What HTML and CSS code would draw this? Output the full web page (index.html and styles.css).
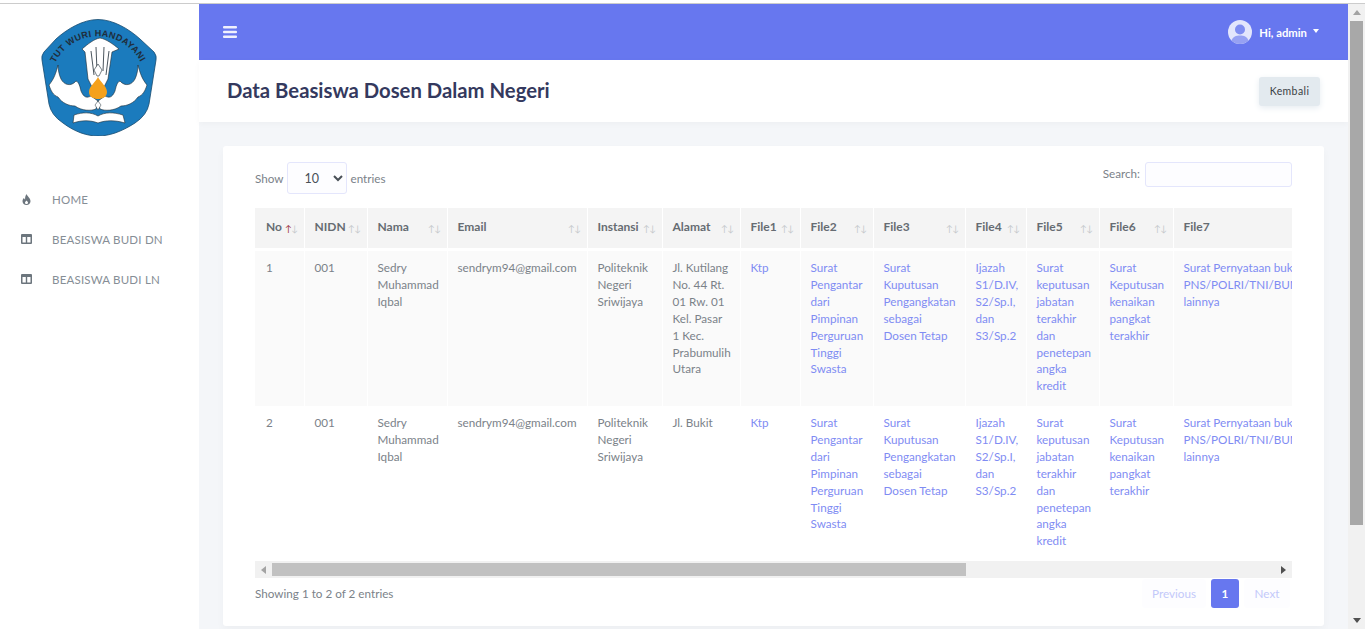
FILE: index.html
```html
<!DOCTYPE html>
<html lang="id">
<head>
    <meta charset="UTF-8">
    <meta name="viewport" content="width=device-width, initial-scale=1.0">
    <title>Data Beasiswa Dosen Dalam Negeri</title>
    <link rel="stylesheet" href="styles.css">
</head>
<body>

<div class="top-strip"></div>

<div class="layout">
    <aside class="sidebar">
        <div class="logo">
            <svg width="116" height="117" viewBox="0 0 116 117">
                <path d="M57 .5C72 .5 88 10 99 20L113 33Q116 37 115 41L108 85Q106 96 94 104C80 113 68 117 57 117C46 117 34 113 22 104Q10 96 8 85L1 41Q0 37 3 33L15 20C26 10 42 .5 57 .5Z" fill="#1b7bbd" stroke="#174a6e" stroke-width=".8"/>
                <defs><path id="logoArc" d="M14 44A48 48 0 0 1 100 44"/></defs>
                <text class="logo-text"><textPath href="#logoArc" textLength="105" lengthAdjust="spacing">TUT WURI HANDAYANI</textPath></text>
                <!-- sayap -->
                <path d="M17 46C15 54 13 60 8 66C10 72 12 76 17 78C21 84 28 87 34 87C41 92 50 92 55 90L57 82L50 77C46 79 43 79 40 72C39 68 38 63 35 62C30 68 23 66 20 60C18 56 17 50 17 46Z" fill="#fff" stroke="#1d2a33" stroke-width=".6"/>
                <path d="M97 46C99 54 101 60 106 66C104 72 102 76 97 78C93 84 86 87 80 87C73 92 64 92 59 90L57 82L64 77C68 79 71 79 74 72C75 68 76 63 79 62C84 68 91 66 94 60C96 56 97 50 97 46Z" fill="#fff" stroke="#1d2a33" stroke-width=".6"/>
                <!-- pena -->
                <path d="M41 30C47 25 53 20 59 19C65 20 72 25 78 30L71 33L67 60L62 70H52L47 60L44 33Z" fill="#fff" stroke="#1d2a33" stroke-width=".6"/>
                <path d="M50 32L53 56M55 28L56 52M63 28L62 52M68 32L65 56" stroke="#1d2a33" stroke-width=".8" fill="none"/>
                <path d="M57 45L61 51L58 57H56L53 51Z" fill="#fff" stroke="#1d2a33" stroke-width=".6"/>
                <!-- api -->
                <path d="M57 58C59 63 66 67 66 73C66 78 61 80 57 80C53 80 48 78 48 73C48 67 55 63 57 58Z" fill="#f5a11c"/>
                <path d="M57 82L60 86L57 91L54 86Z" fill="#fff" stroke="#1d2a33" stroke-width=".5"/>
                <!-- buku -->
                <path d="M33 96C42 93 50 93 57 97C64 93 72 93 82 96L84 104C74 101 65 101 57 104C49 101 41 101 32 104Z" fill="#fff" stroke="#1d2a33" stroke-width=".6"/>
            </svg>
        </div>
        <nav class="side-menu">
            <a class="side-link" href="#">
                <svg class="side-icon" width="10" height="11" viewBox="0 0 10 11"><path d="M5 0C5.500 2 9 4 9 7.200C9 9.500 7.200 11 5 11C2.800 11 1 9.500 1 7.200C1 5.800 1.700 4.700 2.500 4C2.700 4.900 3.100 5.400 3.600 5.600C3.400 3.500 4 1.500 5 0ZM5 6.500C4 7.500 3.500 8 3.500 8.700C3.500 9.500 4.200 10 5 10C5.800 10 6.500 9.500 6.500 8.700C6.500 8 6 7.500 5 6.500Z"/></svg>
                <span>HOME</span>
            </a>
            <a class="side-link" href="#">
                <svg class="side-icon" width="11" height="10" viewBox="0 0 11 10"><path fill-rule="evenodd" d="M1 0H10Q11 0 11 1V9Q11 10 10 10H1Q0 10 0 9V1Q0 0 1 0ZM1.500 3V8.500H4.800V3ZM6.200 3V8.500H9.500V3Z"/></svg>
                <span>BEASISWA BUDI DN</span>
            </a>
            <a class="side-link" href="#">
                <svg class="side-icon" width="11" height="10" viewBox="0 0 11 10"><path fill-rule="evenodd" d="M1 0H10Q11 0 11 1V9Q11 10 10 10H1Q0 10 0 9V1Q0 0 1 0ZM1.500 3V8.500H4.800V3ZM6.200 3V8.500H9.500V3Z"/></svg>
                <span>BEASISWA BUDI LN</span>
            </a>
        </nav>
    </aside>

    <div class="main">
        <header class="navbar">
            <svg class="burger" width="14" height="12" viewBox="0 0 14 12"><rect y="0" width="14" height="2.600" rx="1"/><rect y="4.700" width="14" height="2.600" rx="1"/><rect y="9.400" width="14" height="2.600" rx="1"/></svg>
            <div class="user-menu">
                <svg width="24" height="24" viewBox="0 0 24 24">
                    <circle cx="12" cy="12" r="12" fill="#e3e6fc"/>
                    <circle cx="12" cy="9.500" r="5" fill="#7f8df1"/>
                    <path d="M3.500 20.500C5 16.500 8 15.500 12 15.500C16 15.500 19 16.500 20.500 20.500C18.500 22.800 15.500 24 12 24C8.500 24 5.500 22.800 3.500 20.500Z" fill="#96a1f3"/>
                </svg>
                <span class="user-name">Hi, admin</span>
                <span class="caret"></span>
            </div>
        </header>

        <div class="section-header">
            <h1>Data Beasiswa Dosen Dalam Negeri</h1>
            <a class="btn-back" href="#">Kembali</a>
        </div>

        <div class="content">
            <div class="card">
                <div class="dt-top">
                    <label class="dt-length">Show
                        <select><option>10</option><option>25</option><option>50</option></select>
                        entries</label>
                    <label class="dt-search"><span class="search-label">Search:</span> <input type="text"></label>
                </div>

                <div class="table-wrap">
                    <table>
                        <colgroup>
                            <col class="c-no"><col class="c-nidn"><col class="c-nama"><col class="c-email">
                            <col class="c-instansi"><col class="c-alamat"><col class="c-f1"><col class="c-f2">
                            <col class="c-f3"><col class="c-f4"><col class="c-f5"><col class="c-f6"><col class="c-f7">
                        </colgroup>
                        <thead>
                            <tr>
                                <th><div class="th-in">No <span class="sort"><b>↑</b>↓</span></div></th>
                                <th><div class="th-in">NIDN <span class="sort">↑↓</span></div></th>
                                <th><div class="th-in">Nama <span class="sort">↑↓</span></div></th>
                                <th><div class="th-in">Email <span class="sort">↑↓</span></div></th>
                                <th><div class="th-in">Instansi <span class="sort">↑↓</span></div></th>
                                <th><div class="th-in">Alamat <span class="sort">↑↓</span></div></th>
                                <th><div class="th-in">File1 <span class="sort">↑↓</span></div></th>
                                <th><div class="th-in">File2 <span class="sort">↑↓</span></div></th>
                                <th><div class="th-in">File3 <span class="sort">↑↓</span></div></th>
                                <th><div class="th-in">File4 <span class="sort">↑↓</span></div></th>
                                <th><div class="th-in">File5 <span class="sort">↑↓</span></div></th>
                                <th><div class="th-in">File6 <span class="sort">↑↓</span></div></th>
                                <th><div class="th-in">File7</div></th>
                            </tr>
                        </thead>
                        <tbody>
                            <tr class="odd">
                                <td>1</td>
                                <td>001</td>
                                <td>Sedry<br>Muhammad<br>Iqbal</td>
                                <td>sendrym94@gmail.com</td>
                                <td>Politeknik<br>Negeri<br>Sriwijaya</td>
                                <td>Jl. Kutilang<br>No. 44 Rt.<br>01 Rw. 01<br>Kel. Pasar<br>1 Kec.<br>Prabumulih<br>Utara</td>
                                <td><a href="#">Ktp</a></td>
                                <td><a href="#">Surat<br>Pengantar<br>dari<br>Pimpinan<br>Perguruan<br>Tinggi<br>Swasta</a></td>
                                <td><a href="#">Surat<br>Kuputusan<br>Pengangkatan<br>sebagai<br>Dosen Tetap</a></td>
                                <td><a href="#">Ijazah<br>S1/D.IV,<br>S2/Sp.I,<br>dan<br>S3/Sp.2</a></td>
                                <td><a href="#">Surat<br>keputusan<br>jabatan<br>terakhir<br>dan<br>penetepan<br>angka<br>kredit</a></td>
                                <td><a href="#">Surat<br>Keputusan<br>kenaikan<br>pangkat<br>terakhir</a></td>
                                <td><a href="#">Surat Pernyataan bukan<br>PNS/POLRI/TNI/BUMN/<br>lainnya</a></td>
                            </tr>
                            <tr>
                                <td>2</td>
                                <td>001</td>
                                <td>Sedry<br>Muhammad<br>Iqbal</td>
                                <td>sendrym94@gmail.com</td>
                                <td>Politeknik<br>Negeri<br>Sriwijaya</td>
                                <td>Jl. Bukit</td>
                                <td><a href="#">Ktp</a></td>
                                <td><a href="#">Surat<br>Pengantar<br>dari<br>Pimpinan<br>Perguruan<br>Tinggi<br>Swasta</a></td>
                                <td><a href="#">Surat<br>Kuputusan<br>Pengangkatan<br>sebagai<br>Dosen Tetap</a></td>
                                <td><a href="#">Ijazah<br>S1/D.IV,<br>S2/Sp.I,<br>dan<br>S3/Sp.2</a></td>
                                <td><a href="#">Surat<br>keputusan<br>jabatan<br>terakhir<br>dan<br>penetepan<br>angka<br>kredit</a></td>
                                <td><a href="#">Surat<br>Keputusan<br>kenaikan<br>pangkat<br>terakhir</a></td>
                                <td><a href="#">Surat Pernyataan bukan<br>PNS/POLRI/TNI/BUMN/<br>lainnya</a></td>
                            </tr>
                        </tbody>
                    </table>
                </div>

                <div class="h-scroll">
                    <span class="arrow-left"></span>
                    <div class="h-track"><div class="h-thumb"></div></div>
                    <span class="arrow-right"></span>
                </div>

                <div class="dt-bottom">
                    <div class="dt-info">Showing 1 to 2 of 2 entries</div>
                    <div class="pager">
                        <a class="page-link page-prev" href="#">Previous</a>
                        <a class="page-link active" href="#">1</a>
                        <a class="page-link page-next" href="#">Next</a>
                    </div>
                </div>
            </div>
        </div>
    </div>

    <div class="page-scroll">
        <span class="arrow-up"></span>
        <div class="v-track"><div class="v-thumb"></div></div>
        <span class="arrow-down"></span>
    </div>
</div>

</body>
</html>
```

FILE: styles.css
```css
/* Dasar */
body {
    margin: 0;
    height: 629px;
    overflow: hidden;
    background-color: #fff;
    color: #7b8289;
    font-family: "Lato", "Open Sans", sans-serif;
    font-size: 11.7px;
}
a {
    text-decoration: none;
}
.top-strip {
    height: 3px;
    border-bottom: 1px solid #ccc;
}
.layout {
    display: flex;
    height: 625px;
}

/* Sidebar */
.sidebar {
    width: 199px;
    flex: none;
    background-color: #fff;
}
.logo {
    padding: 15px 0 0 41px;
    height: 160px;
}
.logo-text {
    font-family: "Liberation Sans", sans-serif;
    font-size: 9px;
    font-weight: 700;
    fill: #1f2d3a;
}
.side-link {
    display: flex;
    align-items: center;
    height: 40px;
    color: #868e96;
    font-size: 11.5px;
    letter-spacing: 0.2px;
}
.side-icon {
    fill: #6c757d;
    width: 31px;
    flex: none;
    margin-left: 11px;
    margin-right: 10px;
}

/* Navbar */
.main {
    flex: 1;
    min-width: 0;
    background-color: #f4f6f9;
}
.navbar {
    height: 56px;
    background-color: #6777ef;
    display: flex;
    align-items: center;
    justify-content: space-between;
    padding: 0 29px 0 24px;
}
.burger {
    fill: #fff;
    opacity: 0.9;
}
.user-menu {
    display: flex;
    align-items: center;
    color: #fff;
    font-size: 11.3px;
    font-weight: 700;
}
.user-name {
    margin-left: 7px;
}
.caret {
    margin-left: 6px;
    margin-bottom: 3px;
    border-top: 4px solid #fff;
    border-left: 3.5px solid transparent;
    border-right: 3.5px solid transparent;
}

/* Judul */
.section-header {
    height: 62px;
    box-sizing: border-box;
    background-color: #fff;
    padding: 0 28px;
    display: flex;
    align-items: center;
    justify-content: space-between;
    box-shadow: 0 2px 6px rgba(0, 0, 0, 0.03);
}
.section-header h1 {
    margin: 0 0 2px;
    font-size: 20.3px;
    font-weight: 700;
    color: #34395e;
}
.btn-back {
    width: 61px;
    height: 29px;
    line-height: 29px;
    text-align: center;
    font-size: 10.5px;
    letter-spacing: 0.4px;
    color: #3a3f44;
    background-color: #e3eaef;
    border-radius: 3px;
    box-shadow: 0 2px 6px #e6ecf1;
}

/* Kartu */
.content {
    padding: 24px 24px 0;
}
.card {
    height: 480px;
    box-sizing: border-box;
    background-color: #fff;
    border-radius: 3px;
    padding: 16px 32px 0;
    box-shadow: 0 4px 8px rgba(0, 0, 0, 0.03);
}
.dt-top {
    display: flex;
    justify-content: space-between;
    align-items: flex-start;
    height: 46px;
}
.dt-length {
    display: flex;
    align-items: center;
    gap: 3px;
    height: 32px;
}
.dt-length select {
    width: 60px;
    height: 32px;
    margin-left: 1px;
    padding: 0 0 0 12px;
    border: 1px solid #e4e6fc;
    border-radius: 3px;
    background-color: #fdfdff;
    color: #495057;
    font: inherit;
    font-size: 12.5px;
}
.dt-search {
    display: flex;
    align-items: center;
    gap: 5px;
}
.search-label {
    margin-bottom: 3px;
}
.dt-search input {
    width: 147px;
    height: 25px;
    box-sizing: border-box;
    border: 1px solid #e4e6fc;
    border-radius: 3px;
    background-color: #fdfdff;
}

/* Tabel */
.table-wrap {
    overflow: hidden;
    height: 353px;
}
table {
    width: 1440px;
    table-layout: fixed;
    border-collapse: collapse;
}
.c-no { width: 49px; }
.c-nidn { width: 63px; }
.c-nama { width: 80px; }
.c-email { width: 140px; }
.c-instansi { width: 75px; }
.c-alamat { width: 78px; }
.c-f1 { width: 60px; }
.c-f2 { width: 73px; }
.c-f3 { width: 92px; }
.c-f4 { width: 61px; }
.c-f5 { width: 73px; }
.c-f6 { width: 74px; }
.c-f7 { width: 522px; }
th {
    height: 36px;
    padding: 0 6px 4px 10px;
    background-color: #f4f4f4;
    border-right: 1px solid #fff;
    border-bottom: 3px solid #fff;
    color: #666c72;
    font-size: 12px;
    font-weight: 700;
    text-align: left;
    vertical-align: middle;
}
.th-in {
    display: flex;
    justify-content: space-between;
    align-items: center;
}
.sort {
    font-size: 9px;
    font-weight: 400;
    color: #c4c8cb;
    margin-top: 4px;
    letter-spacing: -0.5px;
}
.sort b {
    font-weight: 400;
    color: #9b2c36;
}
td {
    padding: 8px 10px 10px;
    height: 137px;
    line-height: 16.9px;
    white-space: nowrap;
    vertical-align: top;
    border-right: 1px solid #fff;
}
th:first-child,
td:first-child {
    padding-left: 11px;
}
tr.odd td {
    background-color: #fafafa;
}
td a {
    color: #7f8cf3;
}

/* Scrollbar */
.h-scroll {
    display: flex;
    align-items: center;
    height: 17px;
    background-color: #f1f1f1;
}
.h-track {
    flex: 1;
    height: 13px;
}
.h-thumb {
    width: 694px;
    height: 13px;
    background-color: #c1c1c1;
}
.arrow-left,
.arrow-right {
    width: 17px;
    display: flex;
    justify-content: center;
}
.arrow-left::before {
    content: "";
    border-right: 5px solid #a3a3a3;
    border-top: 4px solid transparent;
    border-bottom: 4px solid transparent;
}
.arrow-right::before {
    content: "";
    border-left: 5px solid #505050;
    border-top: 4px solid transparent;
    border-bottom: 4px solid transparent;
}

.page-scroll {
    width: 17px;
    flex: none;
    display: flex;
    flex-direction: column;
    align-items: center;
    background-color: #f1f1f1;
}
.arrow-up,
.arrow-down {
    height: 17px;
    display: flex;
    align-items: center;
}
.arrow-up::before {
    content: "";
    border-bottom: 5px solid #a3a3a3;
    border-left: 4px solid transparent;
    border-right: 4px solid transparent;
}
.arrow-down::before {
    content: "";
    border-top: 5px solid #505050;
    border-left: 4px solid transparent;
    border-right: 4px solid transparent;
}
.v-track {
    flex: 1;
    width: 13px;
}
.v-thumb {
    height: 504px;
    background-color: #a8a8a8;
}

/* Bawah tabel */
.dt-bottom {
    display: flex;
    justify-content: space-between;
    padding-top: 1px;
}
.dt-info {
    padding-top: 7px;
}
.pager {
    display: flex;
    gap: 5px;
    margin-right: 2px;
}
.page-link {
    height: 29px;
    line-height: 29px;
    padding: 0 10px;
    border-radius: 3px;
    background-color: #fdfdff;
    color: #c3c9fa;
    text-align: center;
    min-width: 8px;
}
.page-prev {
    width: 44px;
}
.page-next {
    width: 26px;
}
.page-link.active {
    background-color: #6777ef;
    color: #fff;
    font-weight: 700;
}
```
